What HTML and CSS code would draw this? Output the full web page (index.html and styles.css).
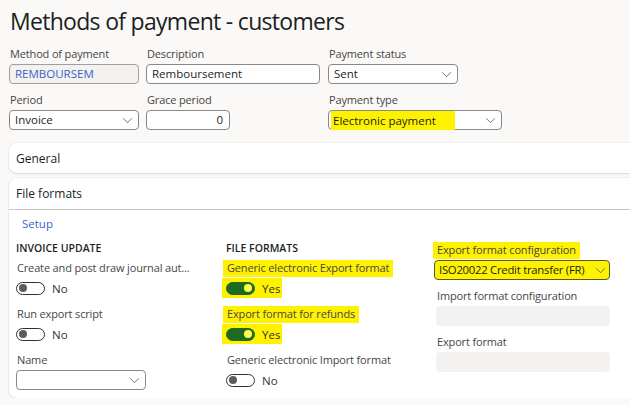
FILE: index.html
```html
<!DOCTYPE html>
<html>
<head>
<meta charset="utf-8">
<link rel="stylesheet" href="styles.css">
</head>
<body>
<div class="page">
  <h1 class="title">Methods of payment - customers</h1>
  <div class="top-grid">
    <div class="field w130">
      <div class="label">Method of payment</div>
      <div class="input readonly">REMBOURSEM</div>
    </div>
    <div class="field w175">
      <div class="label">Description</div>
      <div class="input">Remboursement</div>
    </div>
    <div class="field w175">
      <div class="label">Payment status</div>
      <div class="input select w130">Sent<svg class="chev" viewBox="0 0 12 8"><path d="M1 1.5l5 5 5-5" fill="none" stroke="#605e5c" stroke-width="1"/></svg></div>
    </div>
    <div class="field w130">
      <div class="label">Period</div>
      <div class="input select">Invoice<svg class="chev" viewBox="0 0 12 8"><path d="M1 1.5l5 5 5-5" fill="none" stroke="#605e5c" stroke-width="1"/></svg></div>
    </div>
    <div class="field w175">
      <div class="label">Grace period</div>
      <div class="input num w84">0</div>
    </div>
    <div class="field w175">
      <div class="label">Payment type</div>
      <div class="input select"><span class="hl hl-pt">Electronic payment</span><svg class="chev" viewBox="0 0 12 8"><path d="M1 1.5l5 5 5-5" fill="none" stroke="#605e5c" stroke-width="1"/></svg></div>
    </div>
  </div>

  <div class="card card-general">
    <div class="card-head">General</div>
  </div>

  <div class="card card-files">
    <div class="card-head bordered">File formats</div>
    <div class="card-body">
      <div class="setup">Setup</div>
      <div class="cols">
        <div class="col">
          <div class="group-title">INVOICE UPDATE</div>
          <div class="field">
            <div class="label">Create and post draw journal aut...</div>
            <div class="toggle-row"><span class="toggle"><span class="knob"></span></span><span class="tval">No</span></div>
          </div>
          <div class="field">
            <div class="label">Run export script</div>
            <div class="toggle-row"><span class="toggle"><span class="knob"></span></span><span class="tval">No</span></div>
          </div>
          <div class="field">
            <div class="label">Name</div>
            <div class="input select w130"><svg class="chev" viewBox="0 0 12 8"><path d="M1 1.5l5 5 5-5" fill="none" stroke="#605e5c" stroke-width="1"/></svg></div>
          </div>
        </div>
        <div class="col">
          <div class="group-title">FILE FORMATS</div>
          <div class="field">
            <div class="label"><span class="hl hl-lab1">Generic electronic Export format</span></div>
            <div class="toggle-row hl hl-tog"><span class="toggle on"><span class="knob"></span></span><span class="tval">Yes</span></div>
          </div>
          <div class="field">
            <div class="label"><span class="hl hl-lab2">Export format for refunds</span></div>
            <div class="toggle-row hl hl-tog"><span class="toggle on"><span class="knob"></span></span><span class="tval">Yes</span></div>
          </div>
          <div class="field">
            <div class="label">Generic electronic Import format</div>
            <div class="toggle-row"><span class="toggle"><span class="knob"></span></span><span class="tval">No</span></div>
          </div>
        </div>
        <div class="col col3">
          <div class="field">
            <div class="label"><span class="hl hl-lab3">Export format configuration</span></div>
            <div class="input select hl-box">ISO20022 Credit transfer (FR)<svg class="chev" viewBox="0 0 12 8"><path d="M1 1.5l5 5 5-5" fill="none" stroke="#605e5c" stroke-width="1"/></svg></div>
          </div>
          <div class="field">
            <div class="label">Import format configuration</div>
            <div class="input empty"></div>
          </div>
          <div class="field">
            <div class="label">Export format</div>
            <div class="input empty"></div>
          </div>
        </div>
      </div>
    </div>
  </div>
</div>
</body>
</html>
```

FILE: styles.css
```css
html, body {
  margin: 0;
  padding: 0;
  background: #faf9f8;
  overflow: hidden;
}
body {
  font-family: "Open Sans", "Noto Sans", sans-serif;
  color: #323130;
  font-size: 11px;
}
.page {
  width: 640px;
  padding: 5px 0 0 9px;
}
.title {
  margin: 0 0 0 1px;
  font-size: 23px;
  font-weight: 400;
  line-height: 33px;
  color: #201f1e;
  letter-spacing: -0.7px;
}
.top-grid {
  margin-top: 8px;
  display: grid;
  grid-template-columns: 129px 174px 174px;
  column-gap: 8px;
}
.field {
  display: flex;
  flex-direction: column;
  margin-bottom: 8px;
}
.label {
  height: 16px;
  line-height: 16px;
  color: #484644;
  margin-bottom: 2px;
  padding-left: 1px;
  white-space: nowrap;
  letter-spacing: -0.15px;
}
.input {
  box-sizing: border-box;
  height: 20px;
  border: 1px solid #8a8886;
  border-radius: 4px;
  background: #fff;
  line-height: 18px;
  padding: 0 5px;
  font-size: 11.5px;
  color: #201f1e;
  position: relative;
  white-space: nowrap;
}
.readonly {
  background: #f3f2f1;
  border-color: #a19f9d;
  color: #3b63c4;
}
.num { text-align: right; padding-right: 6px; }
.w130 { width: 130px; }
.w84 { width: 84px; }
.w175 { width: 174px; }
.select { padding-right: 22px; }
.chev {
  position: absolute;
  right: 5px;
  top: 6px;
  width: 11px;
  height: 7px;
}
.hl { background: #fff200; }
.hl-pt {
  display: inline-block;
  margin-left: -3px;
  padding: 0 3px 0 2px;
  width: 119px;
  line-height: 19px;
}
.card {
  background: #fff;
  border-radius: 8px;
  box-shadow: 0 0 2px rgba(0,0,0,0.12), 0 1px 2px rgba(0,0,0,0.10);
}
.card-general { margin-top: 5px; height: 30px; }
.card-files { margin-top: 5px; height: 220px; }
.card-head {
  height: 31px;
  line-height: 31px;
  padding-left: 7px;
  font-size: 12px;
  color: #201f1e;
}
.card-head.bordered {
  height: 31px;
  border-bottom: 1px solid #c8c6c4;
}
.card-body { padding: 6px 0 0 7px; }
.setup {
  color: #3b63c4;
  padding-left: 6px;
  line-height: 16px;
  font-size: 11.5px;
  margin-bottom: 8px;
}
.cols {
  display: grid;
  grid-template-columns: 210px 210px 200px;
}
.col3 { padding-top: 2px; }
.group-title {
  font-weight: 600;
  line-height: 16px;
  height: 16px;
  margin-bottom: 4px;
  font-size: 10.5px;
  color: #201f1e;
}
.toggle-row {
  height: 20px;
  display: flex;
  align-items: center;
}
.toggle {
  box-sizing: border-box;
  width: 29px;
  height: 13px;
  border: 1px solid #323130;
  border-radius: 7px;
  position: relative;
  background: #fff;
}
.knob {
  position: absolute;
  left: 2px;
  top: 1.5px;
  width: 8px;
  height: 8px;
  border-radius: 50%;
  background: #5f5d5b;
}
.toggle.on {
  background: #1e6a1e;
  border-color: #1e6a1e;
}
.toggle.on .knob {
  left: auto;
  right: 2px;
  background: #ffff48;
}
.tval { margin-left: 7px; font-size: 11.5px; }
.hl-lab1, .hl-lab2, .hl-lab3 {
  display: inline-block;
  margin-left: -4px;
  padding: 0 4px 1px 4px;
}
.hl-tog {
  width: 56px;
  margin-left: -4px;
  padding-left: 4px;
}
.hl-box {
  background: #fff200;
  border-color: #5c5a2a;
  width: 176px;
  margin-left: -2px;
  padding-left: 4px;
  padding-right: 14px;
  font-size: 11.3px;
  letter-spacing: -0.25px;
}
.hl-box .chev { right: 3px; }
.empty {
  width: 174px;
  background: #f3f2f1;
  border: none;
}
```
